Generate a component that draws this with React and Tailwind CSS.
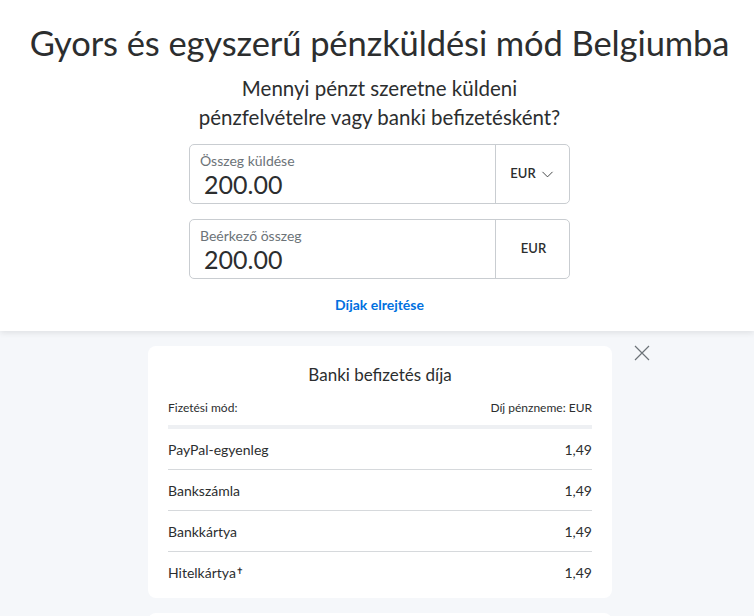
import { ChevronDown } from "lucide-react";

const rows = [
  { name: "PayPal-egyenleg", fee: "1,49" },
  { name: "Bankszámla", fee: "1,49" },
  { name: "Bankkártya", fee: "1,49" },
  { name: "Hitelkártya", fee: "1,49", mark: true },
];

const AmountField = ({ label, value, currency, dropdown }) => (
  <div className="flex h-[60px] w-[381px] rounded-[5px] border border-[#c9cdd1] bg-white">
    <div className="flex flex-1 flex-col justify-center pl-[10px] pt-[1px]">
      <span className="text-[14px] leading-[18px] text-[#6c7378]">{label}</span>
      <span className="pl-[4px] text-[25px] leading-[28px] text-[#2c2e2f]">{value}</span>
    </div>
    <div className="flex w-[74px] items-center justify-center gap-[2px] border-l border-[#c9cdd1] pl-[2px] text-[13px] font-semibold text-[#2c2e2f]">
      {currency}
      {dropdown && <ChevronDown size={19} strokeWidth={1.1} className="text-[#2c2e2f]" />}
    </div>
  </div>
);

export default function App() {
  return (
    <div className="h-[616px] overflow-hidden bg-[#f5f7fa] font-['Lato',sans-serif] text-[#2c2e2f]">
      <header className="relative z-10 flex h-[331px] flex-col items-center bg-white pl-[5px] shadow-[0_2px_6px_rgba(0,0,0,0.09)]">
        <h1 className="mt-[20px] text-[34.5px] leading-[45px] tracking-[-0.1px]">
          Gyors és egyszerű pénzküldési mód Belgiumba
        </h1>
        <p className="mt-[9px] text-center text-[20.5px] leading-[29px]">
          Mennyi pénzt szeretne küldeni
          <br />
          pénzfelvételre vagy banki befizetésként?
        </p>
        <div className="mt-[12px] flex flex-col gap-[15px]">
          <AmountField label="Összeg küldése" value="200.00" currency="EUR" dropdown />
          <AmountField label="Beérkező összeg" value="200.00" currency="EUR" />
        </div>
        <button className="mt-[16px] text-[14px] font-bold leading-[19px] text-[#0070e0]">
          Díjak elrejtése
        </button>
      </header>

      <div className="flex items-start pl-[148px] pt-[15px]">
        <div className="flex w-[464px] flex-col gap-[15px]">
          <section className="rounded-[8px] bg-white px-[20px] pb-[5px] pt-[17px]">
            <h2 className="text-center text-[17px] leading-[24px]">Banki befizetés díja</h2>
            <div className="mt-[13px] flex justify-between text-[12px] leading-[16px]">
              <span>Fizetési mód:</span>
              <span>Díj pénzneme: EUR</span>
            </div>
            <div className="mt-[9px] h-[4px] bg-[#eef0f3]" />
            {rows.map((row, i) => (
              <div
                key={row.name}
                className={`flex h-[41px] items-center justify-between text-[14px] ${
                  i < rows.length - 1 ? "border-b border-[#d6d9dc]" : ""
                }`}
              >
                <span>
                  {row.name}
                  {row.mark && <sup className="text-[9px]">✝</sup>}
                </span>
                <span>{row.fee}</span>
              </div>
            ))}
          </section>
          <section className="h-[60px] rounded-[8px] bg-white" />
        </div>
        <button className="ml-[22px] mt-[-1px] text-[#6c7378]">
          <svg width="16" height="16" viewBox="0 0 16 16" fill="none" stroke="currentColor" strokeWidth="1.2">
            <path d="M1 1l14 14M15 1L1 15" />
          </svg>
        </button>
      </div>
    </div>
  );
}
